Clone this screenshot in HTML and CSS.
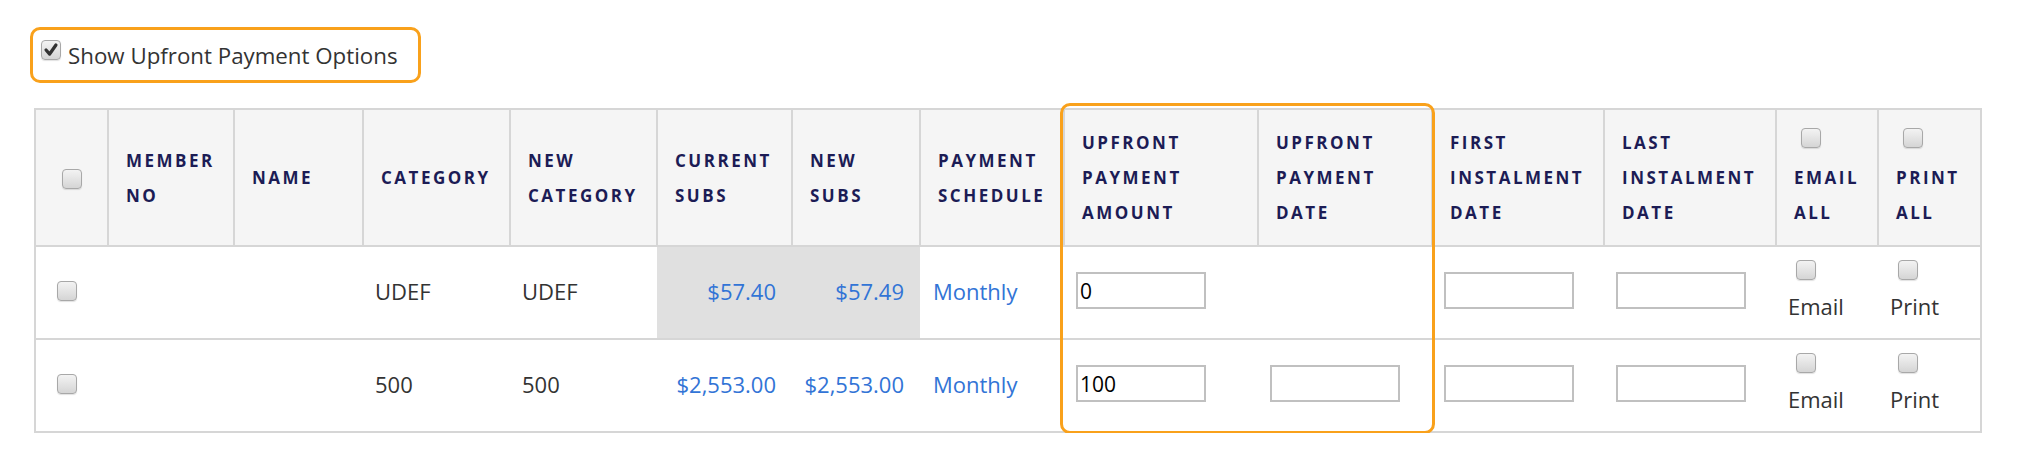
FILE: index.html
```html
<!DOCTYPE html>
<html lang="en">
<head>
<meta charset="utf-8">
<title>Upfront Payment Options</title>
<link rel="stylesheet" href="styles.css">
</head>
<body>
<label class="toggle">
  <span class="cb cb-checked" role="checkbox" aria-checked="true"><svg viewBox="0 0 20 20" width="18" height="18"><path d="M4.5 10 L8.5 14.5 L15.5 4.5" fill="none" stroke="#333" stroke-width="3.6" stroke-linecap="round" stroke-linejoin="round"/></svg></span>
  <span class="toggle-text">Show Upfront Payment Options</span>
</label>

<div class="table-wrap">
  <table class="grid">
    <colgroup>
      <col style="width:73px"><col style="width:126px"><col style="width:129px"><col style="width:147px"><col style="width:147px"><col style="width:135px"><col style="width:128px"><col style="width:144px"><col style="width:194px"><col style="width:174px"><col style="width:172px"><col style="width:172px"><col style="width:102px"><col style="width:103px">
    </colgroup>
    <thead>
      <tr>
        <th class="sel"><span class="cb" role="checkbox"></span></th>
        <th>MEMBER<br>NO</th>
        <th>NAME</th>
        <th>CATEGORY</th>
        <th>NEW<br>CATEGORY</th>
        <th>CURRENT<br>SUBS</th>
        <th>NEW<br>SUBS</th>
        <th>PAYMENT<br>SCHEDULE</th>
        <th>UPFRONT<br>PAYMENT<br>AMOUNT</th>
        <th>UPFRONT<br>PAYMENT<br>DATE</th>
        <th>FIRST<br>INSTALMENT<br>DATE</th>
        <th>LAST<br>INSTALMENT<br>DATE</th>
        <th class="all"><span class="cb hcb" role="checkbox"></span>EMAIL<br>ALL</th>
        <th class="all"><span class="cb hcb" role="checkbox"></span>PRINT<br>ALL</th>
      </tr>
    </thead>
    <tbody>
      <tr>
        <td class="sel"><span class="cb" role="checkbox"></span></td>
        <td></td>
        <td></td>
        <td>UDEF</td>
        <td>UDEF</td>
        <td class="money shade">$57.40</td>
        <td class="money shade">$57.49</td>
        <td class="link">Monthly</td>
        <td><input class="field" type="text" value="0"></td>
        <td></td>
        <td><input class="field" type="text"></td>
        <td><input class="field" type="text"></td>
        <td class="opt"><span class="cb ocb" role="checkbox"></span>Email</td>
        <td class="opt"><span class="cb ocb" role="checkbox"></span>Print</td>
      </tr>
      <tr>
        <td class="sel"><span class="cb" role="checkbox"></span></td>
        <td></td>
        <td></td>
        <td>500</td>
        <td>500</td>
        <td class="money">$2,553.00</td>
        <td class="money">$2,553.00</td>
        <td class="link">Monthly</td>
        <td><input class="field" type="text" value="100"></td>
        <td><input class="field" type="text"></td>
        <td><input class="field" type="text"></td>
        <td><input class="field" type="text"></td>
        <td class="opt"><span class="cb ocb" role="checkbox"></span>Email</td>
        <td class="opt"><span class="cb ocb" role="checkbox"></span>Print</td>
      </tr>
    </tbody>
  </table>
  <div class="highlight"></div>
</div>
</body>
</html>
```

FILE: styles.css
```css
html, body {
  background: #ffffff;
}

body {
  margin: 0;
  padding: 27px 0 0 30px;
  font-family: "Open Sans", "DejaVu Sans", sans-serif;
  color: #333333;
}

.toggle {
  display: inline-flex;
  align-items: center;
  gap: 7px;
  box-sizing: border-box;
  height: 56px;
  padding: 0 20px 0 8px;
  border: 3px solid #f9a11b;
  border-radius: 10px;
  font-size: 22.3px;
  color: #333333;
}

.toggle .cb {
  margin-bottom: 10px;
}

.cb {
  display: inline-flex;
  align-items: center;
  justify-content: center;
  box-sizing: border-box;
  width: 20px;
  height: 20px;
  border: 1px solid #a8a8a8;
  border-radius: 4px;
  background: linear-gradient(#f3f3f3, #d5d5d5);
  box-shadow: 0 1px 1px rgba(0, 0, 0, 0.12);
  vertical-align: middle;
}

.cb svg {
  display: block;
}

.table-wrap {
  position: relative;
  width: 1946px;
  margin: 25px 0 0 4px;
}

.grid {
  width: 1946px;
  table-layout: fixed;
  border-collapse: collapse;
  border: 2px solid #d6d6d6;
}

.grid th {
  background: #f5f5f5;
  border: 2px solid #d6d6d6;
  padding: 15px 6px 15px 17px;
  text-align: left;
  vertical-align: middle;
  font-weight: 700;
  font-size: 17px;
  letter-spacing: 2.5px;
  line-height: 35px;
  color: #1c1c55;
  white-space: nowrap;
}

.grid th.sel {
  padding: 0;
  text-align: center;
}

.grid th.all .hcb {
  display: block;
  margin: 3px 0 12px 7px;
}

.grid td {
  height: 87px;
  padding: 0 12px 4px;
  border-top: 2px solid #d6d6d6;
  vertical-align: middle;
  font-size: 22px;
  color: #333333;
  white-space: nowrap;
}

.grid td.sel {
  padding-left: 21px;
}

.grid td.sel .cb {
  display: flex;
}

.grid td.money {
  text-align: right;
  padding-right: 16px;
  color: #3274d6;
}

.grid td.shade {
  background: #e0e0e0;
}

.grid td.link {
  padding-left: 13px;
  color: #3274d6;
}

.field {
  display: block;
  box-sizing: border-box;
  width: 130px;
  height: 37px;
  margin: 0;
  padding: 0 2px;
  border: 2px solid #c0c0c0;
  background: #ffffff;
  font-family: "Open Sans", "DejaVu Sans", sans-serif;
  font-size: 21px;
  color: #000000;
}

.grid td.opt {
  height: 85px;
  padding-left: 12px;
  padding-bottom: 6px;
  line-height: 28px;
}

.grid td.opt .ocb {
  display: block;
  margin: 0 0 12px 8px;
}

.highlight {
  position: absolute;
  left: 1026px;
  top: -5px;
  width: 375px;
  height: 331px;
  box-sizing: border-box;
  border: 3px solid #f9a11b;
  border-radius: 10px;
  pointer-events: none;
}
```
